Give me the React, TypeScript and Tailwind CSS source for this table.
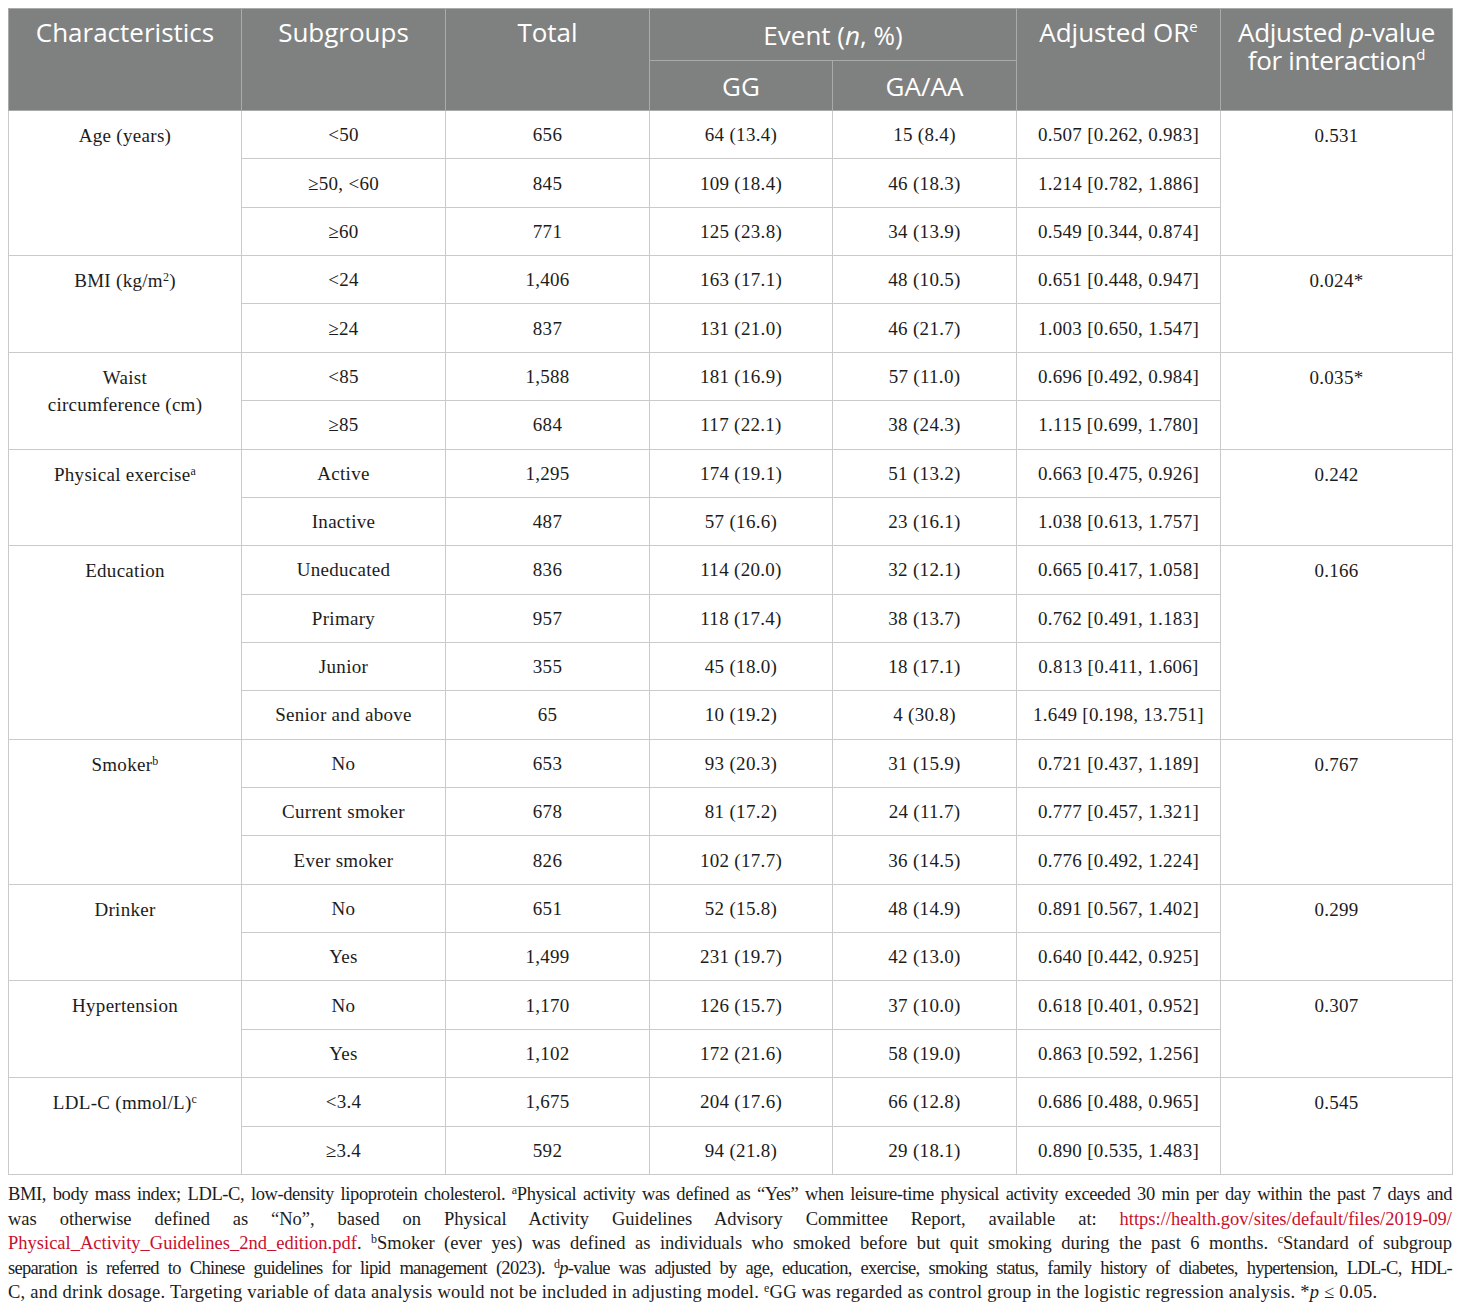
import React from 'react';

type Row = {
  sub: string;
  total: string;
  gg: string;
  ga: string;
  or: string;
};

type Group = {
  label: React.ReactNode;
  p: string;
  rows: Row[];
};

const sup = 'text-[12px] leading-none';

const groups: Group[] = [
  {
    label: 'Age (years)',
    p: '0.531',
    rows: [
      { sub: '<50', total: '656', gg: '64 (13.4)', ga: '15 (8.4)', or: '0.507 [0.262, 0.983]' },
      { sub: '≥50, <60', total: '845', gg: '109 (18.4)', ga: '46 (18.3)', or: '1.214 [0.782, 1.886]' },
      { sub: '≥60', total: '771', gg: '125 (23.8)', ga: '34 (13.9)', or: '0.549 [0.344, 0.874]' },
    ],
  },
  {
    label: (
      <>
        BMI (kg/m<sup className={sup}>2</sup>)
      </>
    ),
    p: '0.024*',
    rows: [
      { sub: '<24', total: '1,406', gg: '163 (17.1)', ga: '48 (10.5)', or: '0.651 [0.448, 0.947]' },
      { sub: '≥24', total: '837', gg: '131 (21.0)', ga: '46 (21.7)', or: '1.003 [0.650, 1.547]' },
    ],
  },
  {
    label: (
      <>
        Waist
        <br />
        circumference (cm)
      </>
    ),
    p: '0.035*',
    rows: [
      { sub: '<85', total: '1,588', gg: '181 (16.9)', ga: '57 (11.0)', or: '0.696 [0.492, 0.984]' },
      { sub: '≥85', total: '684', gg: '117 (22.1)', ga: '38 (24.3)', or: '1.115 [0.699, 1.780]' },
    ],
  },
  {
    label: (
      <>
        Physical exercise<sup className={sup}>a</sup>
      </>
    ),
    p: '0.242',
    rows: [
      { sub: 'Active', total: '1,295', gg: '174 (19.1)', ga: '51 (13.2)', or: '0.663 [0.475, 0.926]' },
      { sub: 'Inactive', total: '487', gg: '57 (16.6)', ga: '23 (16.1)', or: '1.038 [0.613, 1.757]' },
    ],
  },
  {
    label: 'Education',
    p: '0.166',
    rows: [
      { sub: 'Uneducated', total: '836', gg: '114 (20.0)', ga: '32 (12.1)', or: '0.665 [0.417, 1.058]' },
      { sub: 'Primary', total: '957', gg: '118 (17.4)', ga: '38 (13.7)', or: '0.762 [0.491, 1.183]' },
      { sub: 'Junior', total: '355', gg: '45 (18.0)', ga: '18 (17.1)', or: '0.813 [0.411, 1.606]' },
      { sub: 'Senior and above', total: '65', gg: '10 (19.2)', ga: '4 (30.8)', or: '1.649 [0.198, 13.751]' },
    ],
  },
  {
    label: (
      <>
        Smoker<sup className={sup}>b</sup>
      </>
    ),
    p: '0.767',
    rows: [
      { sub: 'No', total: '653', gg: '93 (20.3)', ga: '31 (15.9)', or: '0.721 [0.437, 1.189]' },
      { sub: 'Current smoker', total: '678', gg: '81 (17.2)', ga: '24 (11.7)', or: '0.777 [0.457, 1.321]' },
      { sub: 'Ever smoker', total: '826', gg: '102 (17.7)', ga: '36 (14.5)', or: '0.776 [0.492, 1.224]' },
    ],
  },
  {
    label: 'Drinker',
    p: '0.299',
    rows: [
      { sub: 'No', total: '651', gg: '52 (15.8)', ga: '48 (14.9)', or: '0.891 [0.567, 1.402]' },
      { sub: 'Yes', total: '1,499', gg: '231 (19.7)', ga: '42 (13.0)', or: '0.640 [0.442, 0.925]' },
    ],
  },
  {
    label: 'Hypertension',
    p: '0.307',
    rows: [
      { sub: 'No', total: '1,170', gg: '126 (15.7)', ga: '37 (10.0)', or: '0.618 [0.401, 0.952]' },
      { sub: 'Yes', total: '1,102', gg: '172 (21.6)', ga: '58 (19.0)', or: '0.863 [0.592, 1.256]' },
    ],
  },
  {
    label: (
      <>
        LDL-C (mmol/L)<sup className={sup}>c</sup>
      </>
    ),
    p: '0.545',
    rows: [
      { sub: '<3.4', total: '1,675', gg: '204 (17.6)', ga: '66 (12.8)', or: '0.686 [0.488, 0.965]' },
      { sub: '≥3.4', total: '592', gg: '94 (21.8)', ga: '29 (18.1)', or: '0.890 [0.535, 1.483]' },
    ],
  },
];

const th = 'border border-[#a9abaa] font-normal text-white';
const td = 'border border-[#cacaca] text-center align-middle p-0';
const hsup = 'text-[15px] leading-none -top-[10px]';

export default function App() {
  return (
    <div className="bg-white px-[8px] pt-[8px] pb-[6px] min-h-[1310px]">
      <table className="w-[1444px] table-fixed border-collapse">
        <colgroup>
          <col className="w-[233px]" />
          <col className="w-[204px]" />
          <col className="w-[204px]" />
          <col className="w-[183px]" />
          <col className="w-[184px]" />
          <col className="w-[204px]" />
          <col className="w-[232px]" />
        </colgroup>

        {/* Header */}
        <thead className="bg-[#7f8180] font-['Open_Sans',sans-serif] text-[26px] leading-[28px]">
          <tr className="h-[52px]">
            <th rowSpan={2} className={`${th} align-top pt-[9px]`}>Characteristics</th>
            <th rowSpan={2} className={`${th} align-top pt-[9px]`}>Subgroups</th>
            <th rowSpan={2} className={`${th} align-top pt-[9px]`}>Total</th>
            <th colSpan={2} className={`${th} align-middle`}>
              Event (<i>n</i>, %)
            </th>
            <th rowSpan={2} className={`${th} align-top pt-[9px]`}>
              Adjusted OR<sup className={hsup}>e</sup>
            </th>
            <th rowSpan={2} className={`${th} align-top pt-[9px] tracking-[-0.3px]`}>
              Adjusted <i>p</i>-value
              <br />
              for interaction<sup className={hsup}>d</sup>
            </th>
          </tr>
          <tr className="h-[50px]">
            <th className={`${th} align-middle`}>GG</th>
            <th className={`${th} align-middle`}>GA/AA</th>
          </tr>
        </thead>

        {/* Body */}
        <tbody className="font-['Liberation_Serif',serif] text-[19px] leading-[27px] tracking-[0.3px] text-[#1c1c1c]">
          {groups.map((g, gi) =>
            g.rows.map((r, ri) => (
              <tr key={`${gi}-${ri}`} className="h-[48.36px]">
                {ri === 0 && (
                  <td rowSpan={g.rows.length} className={`${td} !align-top pt-[11px]`}>
                    {g.label}
                  </td>
                )}
                <td className={td}>{r.sub}</td>
                <td className={td}>{r.total}</td>
                <td className={td}>{r.gg}</td>
                <td className={td}>{r.ga}</td>
                <td className={td}>{r.or}</td>
                {ri === 0 && (
                  <td rowSpan={g.rows.length} className={`${td} !align-top pt-[11px]`}>
                    {g.p}
                  </td>
                )}
              </tr>
            ))
          )}
        </tbody>
      </table>

      {/* Footnote */}
      <div className="w-[1444px] mt-[7px] font-['Liberation_Serif',serif] text-[18.5px] leading-[24.6px] text-[#1c1c1c]">
        <div className="text-justify [text-align-last:justify] whitespace-nowrap tracking-[-0.4px]">
          BMI, body mass index; LDL-C, low-density lipoprotein cholesterol. <sup className={sup}>a</sup>Physical activity was defined as “Yes” when leisure-time physical activity exceeded 30 min per day within the past 7 days and
        </div>
        <div className="text-justify [text-align-last:justify] whitespace-nowrap">
          was otherwise defined as “No”, based on Physical Activity Guidelines Advisory Committee Report, available at:{' '}
          <span className="text-[#c8102e]">https://health.gov/sites/default/files/2019-09/</span>
        </div>
        <div className="text-justify [text-align-last:justify] whitespace-nowrap">
          <span className="text-[#c8102e]">Physical_Activity_Guidelines_2nd_edition.pdf</span>. <sup className={sup}>b</sup>Smoker (ever yes) was defined as individuals who smoked before but quit smoking during the past 6 months. <sup className={sup}>c</sup>Standard of subgroup
        </div>
        <div className="text-justify [text-align-last:justify] whitespace-nowrap tracking-[-0.7px]">
          separation is referred to Chinese guidelines for lipid management (2023). <sup className={sup}>d</sup><i>p</i>-value was adjusted by age, education, exercise, smoking status, family history of diabetes, hypertension, LDL-C, HDL-
        </div>
        <div className="whitespace-nowrap tracking-[0.24px]">
          C, and drink dosage. Targeting variable of data analysis would not be included in adjusting model. <sup className={sup}>e</sup>GG was regarded as control group in the logistic regression analysis. *<i>p</i> ≤ 0.05.
        </div>
      </div>
    </div>
  );
}
